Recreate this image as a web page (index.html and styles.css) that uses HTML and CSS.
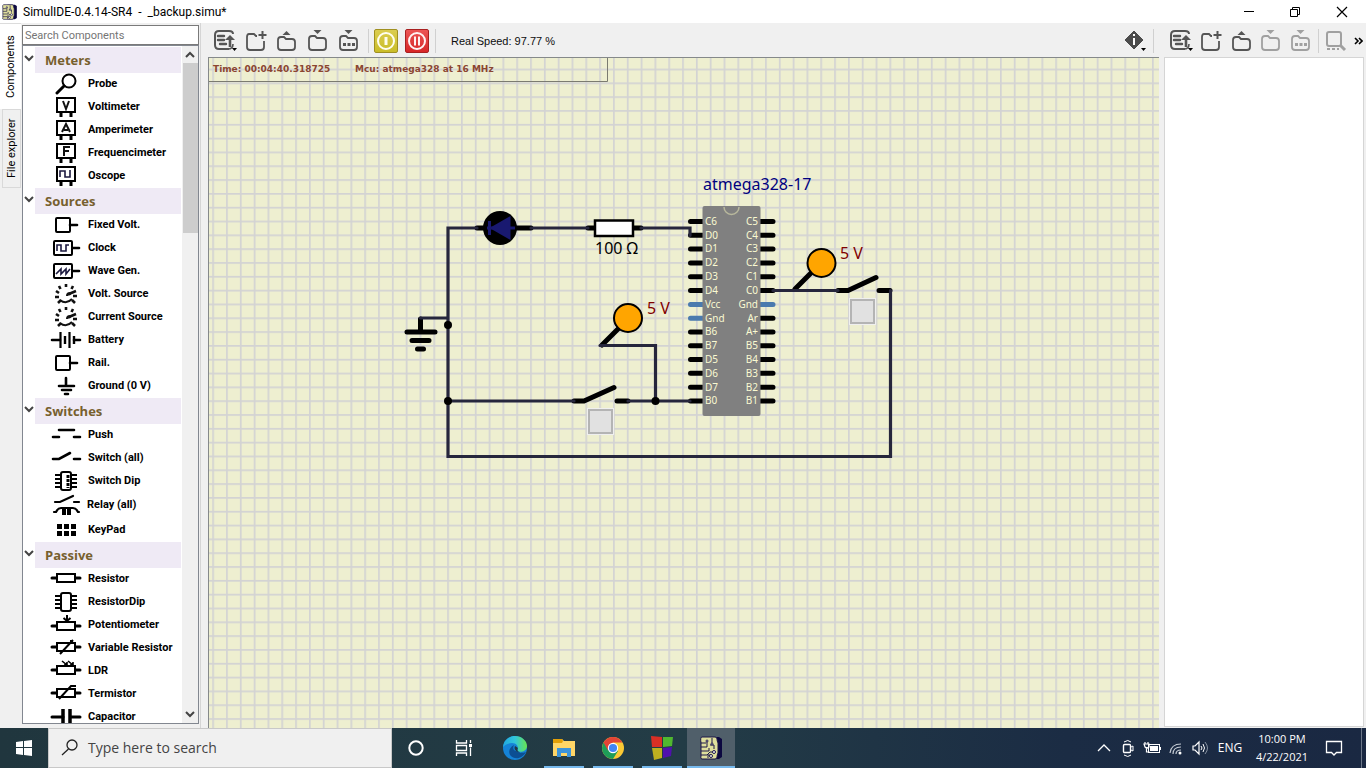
FILE: index.html
```html
<!DOCTYPE html>
<html lang="en">
<head>
<meta charset="utf-8">
<title>SimulIDE-0.4.14-SR4 - _backup.simu*</title>
<link rel="stylesheet" href="styles.css">
</head>
<body>
<svg class="defs" aria-hidden="true">
  <defs>
    <symbol id="chip-logo" viewBox="0 0 22 24">
      <path d="M8 1h11l3 2v18l-3 2H8z" fill="#0c0840"/>
      <path d="M2 1h13q2 0 2 2 0 2 1 4v10q-1 2-1 4 0 2-2 2H2q-2 0-1-3 0-2 0-4V7Q0 1 2 1z" fill="#dede9c" stroke="#1c1648"/>
      <path d="M1 7h5M1 11h6v-6M1 15h8v-3M1 19h6l3-3h3M12 2v5M8 22v-3h3M14 9v4M10 9h4" fill="none" stroke="#1c1648"/>
      <circle cx="7" cy="5" r="1" fill="#fff" stroke="#1c1648"/><circle cx="12" cy="8" r="1" fill="#fff" stroke="#1c1648"/><circle cx="14" cy="16" r="1.500" fill="#fff" stroke="#1c1648"/><circle cx="11" cy="20" r="1.500" fill="#fff" stroke="#1c1648"/>
    </symbol>
    <symbol id="list-up" viewBox="0 0 24 24">
      <path d="M20 5Q20 2 16 2H6Q2 2 2 6v10q0 4 4 4h10" fill="none" stroke="currentColor" stroke-width="2"/>
      <path d="M5 7h6M5 11h6M7 15h6" stroke="currentColor" stroke-width="2.4" stroke-linecap="round"/>
      <path d="M17 18V10" stroke="currentColor" stroke-width="2.6"/><path d="M12 11l5-5 5 5z" fill="currentColor"/><path d="M15 20q5 0 5-5" fill="none" stroke="currentColor" stroke-width="1.6"/>
      <path d="M19 19h5l-2.500 3z" fill="#000"/>
    </symbol>
    <symbol id="folder-new" viewBox="0 0 22 22">
      <path d="M12 6h-1L9 4H4Q2 4 2 7v10q0 3 3 3h11q3 0 3-3v-6" fill="none" stroke="currentColor" stroke-width="1.8"/><path d="M17.500 1v8M13.500 5h8" stroke="currentColor" stroke-width="2"/>
    </symbol>
    <symbol id="folder-up" viewBox="0 0 22 22">
      <path d="M2 10q0-3 3-3h3l2 2h6q3 0 3 3v5q0 3-3 3H5q-3 0-3-3z" fill="none" stroke="currentColor" stroke-width="1.800"/><path d="M6.500 5h8L10.500 1z" fill="currentColor"/>
    </symbol>
    <symbol id="folder-down" viewBox="0 0 22 22">
      <path d="M2 9q0-3 3-3h3l2 2h6q3 0 3 3v6q0 3-3 3H5q-3 0-3-3z" fill="none" stroke="currentColor" stroke-width="1.800"/><path d="M6.500 0h8L10.500 4z" fill="currentColor"/>
    </symbol>
    <symbol id="folder-dots" viewBox="0 0 22 22">
      <use href="#folder-down"/><path d="M5 13h3v3H5zM9.500 13h3v3h-3zM14 13h3v3h-3z" fill="currentColor"/>
    </symbol>
    <symbol id="meter" viewBox="0 0 32 22"><path d="M7 2h18v14H7z" fill="#fff" stroke="#000" stroke-width="2"/><path d="M11 17v4M21 17v4" stroke="#000" stroke-width="3"/></symbol>
    <symbol id="box-pin" viewBox="0 0 32 22"><rect x="6" y="4" width="14" height="14" rx="1" fill="#fff" stroke="#000" stroke-width="2"/><path d="M20 11h7" stroke="#000" stroke-width="2.600" stroke-linecap="round"/></symbol>
    <symbol id="gen" viewBox="0 0 32 22"><rect x="4" y="4" width="18" height="14" rx="1" fill="#fff" stroke="#000" stroke-width="2"/><path d="M23 11h6" stroke="#000" stroke-width="2.600" stroke-linecap="round"/></symbol>
    <symbol id="knob" viewBox="0 0 32 22"><path d="M16 1v3M9 3l1.500 3M23 3l-1.500 3M6 8l3 2M5 14h4M8 20l3-3M26 8l-6 2.500M27 13h-4M25 20l-3-3M18 11.500l3-1" stroke="#111" stroke-width="2.600"/><path d="M10 17q6 5 12-1M20 10q-3 0-3 3" fill="none" stroke="#111" stroke-width="2"/></symbol>
    <symbol id="res" viewBox="0 0 32 22"><path d="M2 11h28" stroke="#000" stroke-width="3" stroke-linecap="round"/><rect x="7" y="7" width="18" height="8" fill="#fff" stroke="#000" stroke-width="2"/></symbol>
    <symbol id="dip" viewBox="0 0 32 22"><path d="M5 5h22M5 9h22M5 13h22M5 17h22" stroke="#000" stroke-width="2"/><rect x="11" y="2" width="10" height="18" rx="2" fill="#fff" stroke="#000" stroke-width="2"/></symbol>
    <pattern id="grid" x="447.2" y="68.6" width="13.82" height="13.82" patternUnits="userSpaceOnUse"><path d="M0 0H13.820V1.700H1.700V13.820H0z" fill="#d3d3d3"/></pattern>
    <linearGradient id="edge-g" x1="0" y1="0" x2="1" y2="0"><stop offset="0" stop-color="#22a7df"/><stop offset=".5" stop-color="#31c6db"/><stop offset="1" stop-color="#68e34f"/></linearGradient>
  </defs>
</svg>
<div class="app">
  <header class="titlebar">
    <svg class="title-logo"><use href="#chip-logo"/></svg>
    <h1 class="title-text">SimulIDE-0.4.14-SR4 &nbsp;- &nbsp;_backup.simu*</h1>
    <div class="window-controls">
      <button aria-label="Minimize"><svg width="12" height="12"><path d="M1 5.500h10" stroke="#000"/></svg></button>
      <button aria-label="Restore"><svg width="12" height="12"><path d="M1.500 3.500h7v7h-7zM3.500 3.500v-2h7v7h-2" fill="none" stroke="#000"/></svg></button>
      <button aria-label="Close"><svg width="12" height="12"><path d="M1 1l10 10M11 1L1 11" stroke="#000" stroke-width="1.200"/></svg></button>
    </div>
  </header>
  <main class="workspace">
    <nav class="side-tabs" aria-label="Panels">
      <button class="side-tab side-tab-active">Components</button>
      <button class="side-tab">File explorer</button>
    </nav>
    <aside class="sidebar">
      <input class="search" type="text" aria-label="Search Components" placeholder="Search Components">
      <div class="tree-box">
        <div class="tree">
          <section><button class="group"><svg class="arrow"><path d="M1 2l4 4 4-4" /></svg><span>Meters</span></button>
            <ul>
              <li><svg class="ico"><circle cx="19" cy="8" r="6.500" fill="#fff" stroke="#000" stroke-width="2"/><path d="M14 13l-7 7" stroke="#000" stroke-width="3" stroke-linecap="round"/></svg>Probe</li>
              <li><svg class="ico"><use href="#meter"/><path d="M13 5l3 8 3-8" fill="none" stroke="#111" stroke-width="2"/></svg>Voltimeter</li>
              <li><svg class="ico"><use href="#meter"/><path d="M12 13l4-8 4 8M14 11h4" fill="none" stroke="#111" stroke-width="2"/></svg>Amperimeter</li>
              <li><svg class="ico"><use href="#meter"/><path d="M14 14V5h6M14 9h5" fill="none" stroke="#111" stroke-width="2"/></svg>Frequencimeter</li>
              <li><svg class="ico"><use href="#meter"/><path d="M10 12V6h5v6h5V5" fill="none" stroke="#1c1a40" stroke-width="1.600"/></svg>Oscope</li>
            </ul></section>
          <section><button class="group"><svg class="arrow"><path d="M1 2l4 4 4-4" /></svg><span>Sources</span></button>
            <ul>
              <li><svg class="ico"><use href="#box-pin"/></svg>Fixed Volt.</li>
              <li><svg class="ico"><use href="#gen"/><path d="M7 14V8h4v6h5V8h3" fill="none" stroke="#1c1a40" stroke-width="1.600"/></svg>Clock</li>
              <li><svg class="ico"><use href="#gen"/><path d="M6 14l5-5v5l5-5v5l4-5" fill="none" stroke="#1c1a40" stroke-width="1.600"/></svg>Wave Gen.</li>
              <li><svg class="ico"><use href="#knob"/></svg>Volt. Source</li>
              <li><svg class="ico"><use href="#knob"/></svg>Current Source</li>
              <li><svg class="ico"><path d="M2 11h8M24 11h6" stroke="#000" stroke-width="2.600" stroke-linecap="round"/><path d="M10.500 3v16M19.500 3v16" stroke="#000" stroke-width="2.200"/><path d="M15 7v8M24 7v8" stroke="#000" stroke-width="2.400"/></svg>Battery</li>
              <li><svg class="ico"><use href="#box-pin"/></svg>Rail.</li>
              <li><svg class="ico"><path d="M16 3v8M9 11h15M12 15h9M15 19h3" stroke="#000" stroke-width="2.600" stroke-linecap="round"/></svg>Ground (0 V)</li>
            </ul></section>
          <section><button class="group"><svg class="arrow"><path d="M1 2l4 4 4-4" /></svg><span>Switches</span></button>
            <ul>
              <li><svg class="ico"><path d="M3 13h6M24 13h6M9 6h15" stroke="#000" stroke-width="2.600" stroke-linecap="round"/></svg>Push</li>
              <li><svg class="ico"><path d="M3 12h6l11-6M24 12h6" fill="none" stroke="#000" stroke-width="2.600" stroke-linecap="round"/></svg>Switch (all)</li>
              <li><svg class="ico"><use href="#dip"/><path d="M18 5v13" stroke="#000" stroke-width="3" stroke-dasharray="3 1"/></svg>Switch Dip</li>
              <li class="tall"><svg class="ico"><path d="M5 8h5l13-6M24 8h5M4 18h2q2-4 5-4h12q3 0 5 4h1" fill="none" stroke="#000" stroke-width="2.200" stroke-linecap="round"/><path d="M13 14v6h2v-6M18 14v6h2v-6" fill="none" stroke="#000" stroke-width="2"/></svg>Relay (all)</li>
              <li><svg class="ico"><path d="M7 5h5v5H7zM14 5h5v5h-5zM21 5h5v5h-5zM7 12h5v5H7zM14 12h5v5h-5zM21 12h5v5h-5z"/></svg>KeyPad</li>
            </ul></section>
          <section><button class="group"><svg class="arrow"><path d="M1 2l4 4 4-4" /></svg><span>Passive</span></button>
            <ul>
              <li><svg class="ico"><use href="#res" y="-1"/></svg>Resistor</li>
              <li><svg class="ico"><use href="#dip"/></svg>ResistorDip</li>
              <li><svg class="ico"><use href="#res" y="1"/><path d="M17 1v6M13.500 4l3.500 3 3.500-3" fill="none" stroke="#000" stroke-width="2"/></svg>Potentiometer</li>
              <li><svg class="ico"><use href="#res" y="-1"/><path d="M10 17L23 3M20 4h3" fill="none" stroke="#000" stroke-width="2"/></svg>Variable Resistor</li>
              <li><svg class="ico"><use href="#res" y="-1"/><path d="M12 1l5 4M18 1l5 4M17 2v3h-3M23 2v3h-3" fill="none" stroke="#000" stroke-width="1.600"/></svg>LDR</li>
              <li><svg class="ico"><use href="#res" y="-1"/><path d="M9 16L21 3h5" fill="none" stroke="#000" stroke-width="2"/></svg>Termistor</li>
              <li><svg class="ico"><path d="M2 11h11M21 11h9" stroke="#000" stroke-width="3" stroke-linecap="round"/><path d="M13 3v16M20 3v16" stroke="#000" stroke-width="3.500"/></svg>Capacitor</li>
            </ul></section>
        </div>
        <div class="scrollbar">
          <svg class="arrow"><path d="M1 7l4-4 4 4"/></svg>
          <div class="thumb"></div>
          <svg class="arrow scroll-down"><path d="M1 2l4 4 4-4"/></svg>
        </div>
      </div>
    </aside>
    <section class="editor">
      <div class="toolbar">
        <button class="tool" aria-label="Recent circuits"><svg width="24" height="24"><use href="#list-up"/></svg></button>
        <button class="tool" aria-label="New circuit"><svg width="22" height="22"><use href="#folder-new"/></svg></button>
        <button class="tool" aria-label="Open circuit"><svg width="22" height="22"><use href="#folder-up"/></svg></button>
        <button class="tool" aria-label="Save circuit"><svg width="22" height="22"><use href="#folder-down"/></svg></button>
        <button class="tool" aria-label="Save circuit as"><svg width="22" height="22"><use href="#folder-dots"/></svg></button>
        <span class="divider divider-tight"></span>
        <button class="power power-on" aria-label="Power"><svg width="22" height="22"><circle cx="11" cy="11" r="8" fill="none" stroke="#fffef0" stroke-width="2"/><path d="M11 7v8" stroke="#fffef0" stroke-width="3"/></svg></button>
        <button class="power power-pause" aria-label="Pause"><svg width="22" height="22"><circle cx="11" cy="11" r="8" fill="none" stroke="#fff3f3" stroke-width="2"/><path d="M9 6.500v9M13 6.500v9" stroke="#fff3f3" stroke-width="2"/></svg></button>
        <span class="divider"></span>
        <span class="speed">Real Speed: 97.77 %</span>
        <button class="tool tool-info" aria-label="Info"><svg width="22" height="22"><path d="M10 1l9 9-9 9-9-9z" fill="#4c4c4c" stroke="#4c4c4c" stroke-linejoin="round"/><path d="M10 8v7M10 4v2" stroke="#fff" stroke-width="2"/><path d="M17 18h5l-2.500 3z"/></svg></button>
        <span class="divider"></span>
      </div>
      <div class="canvas">
        <svg class="circuit" role="img" aria-label="Circuit">
          <g transform="translate(-209 -58)">
            <rect x="200" y="50" width="110%" height="110%" fill="url(#grid)"/>
            <path d="M209 81.500h398.500V57" fill="none" stroke="#7b7b70"/>
            <g class="time"><text x="213" y="72">Time: 00:04:40.318725</text><text x="355" y="72">Mcu: atmega328 at 16 MHz</text></g>
            <path d="M477 228h54M588 228h53M420.500 319v12M407 332h28M412 340.500h17M417.500 349h6M602 345l17-17M795 289l17-17M574 401h10l30-13.500M617 401h11M838 290.500h10l28-13M879 290.500h11" fill="none" stroke="#000" stroke-width="5" stroke-linecap="round"/>
            <circle cx="500" cy="228" r="17"/><path d="M489.500 221v14M487 228h28" stroke="#191970" stroke-width="3"/><path d="M510.500 216v24l-21-12z" fill="#191970"/>
            <rect x="595" y="220.500" width="38" height="15.500" fill="#fff" stroke="#000" stroke-width="2.500"/>
            <g stroke="#000" stroke-width="2" fill="orange"><circle cx="628" cy="318" r="14"/><circle cx="821.500" cy="263" r="14"/></g>
            <g class="pins">
              <path d="M690.500 221.500h12M690.500 235.300h12M690.500 249.100h12M690.500 262.900h12M690.500 276.700h12M690.500 290.500h12M690.500 332h12M690.500 345.700h12M690.500 359.500h12M690.500 373.300h12M690.500 387.200h12M690.500 401h12M760 221.500h13M760 235.300h13M760 249.100h13M760 262.900h13M760 276.700h13M760 290.500h13M760 318.200h13M760 332h13M760 345.700h13M760 359.500h13M760 373.300h13M760 387.200h13M760 401h13"/>
              <path class="rail" d="M690.500 304.400h12M690.500 318.200h12M760 304.400h13"/>
            </g>
            <rect x="702.500" y="206" width="58" height="210" rx="2" fill="#808080"/>
            <path d="M724 207a7.500 7.500 0 0 0 15 0" fill="none" stroke="#b8b89c" stroke-width="1.500"/>
            <g class="pin-label">
              <text x="705" y="225">C6</text><text x="705" y="239">D0</text><text x="705" y="252">D1</text><text x="705" y="266">D2</text><text x="705" y="280">D3</text><text x="705" y="294">D4</text><text x="705" y="308">Vcc</text><text x="705" y="322">Gnd</text><text x="705" y="335">B6</text><text x="705" y="349">B7</text><text x="705" y="363">D5</text><text x="705" y="377">D6</text><text x="705" y="391">D7</text><text x="705" y="404">B0</text>
              <g text-anchor="end"><text x="758" y="225">C5</text><text x="758" y="239">C4</text><text x="758" y="252">C3</text><text x="758" y="266">C2</text><text x="758" y="280">C1</text><text x="758" y="294">C0</text><text x="758" y="308">Gnd</text><text x="758" y="322">Ar</text><text x="758" y="335">A+</text><text x="758" y="349">B5</text><text x="758" y="363">B4</text><text x="758" y="377">B3</text><text x="758" y="391">B2</text><text x="758" y="404">B1</text></g>
            </g>
            <path d="M477 228h-29v228.500h442.500v-166M531 228h57M641 228h49v7.500M420.500 318h27.500M448 401h126M600 345.500h55.500V401M628 401h62M773 290.500h65" fill="none" stroke="#26263c" stroke-width="3.200" stroke-linecap="round"/>
            <circle cx="448" cy="325" r="4"/><circle cx="448" cy="401" r="4"/><circle cx="655.500" cy="401" r="4"/>
            <g class="part-label"><text x="703" y="190" fill="#00007f">atmega328-17</text><text x="595" y="254">100 Ω</text><text x="647" y="314" fill="#7f0000">5 V</text><text x="840" y="259" fill="#7f0000">5 V</text></g>
          </g>
        </svg>
        <button class="key key-low" aria-label="Switch 1"></button>
        <button class="key key-high" aria-label="Switch 2"></button>
      </div>
    </section>
    <section class="code-panel">
      <div class="toolbar">
        <button class="tool" aria-label="Recent files"><svg width="24" height="24"><use href="#list-up"/></svg></button>
        <button class="tool" aria-label="New file"><svg width="22" height="22"><use href="#folder-new"/></svg></button>
        <button class="tool" aria-label="Open file"><svg width="22" height="22"><use href="#folder-up"/></svg></button>
        <button class="tool" aria-label="Save file" disabled><svg width="22" height="22"><use href="#folder-down"/></svg></button>
        <button class="tool" aria-label="Save file as" disabled><svg width="22" height="22"><use href="#folder-dots"/></svg></button>
        <span class="divider"></span>
        <button class="tool tool-find" aria-label="Find" disabled><svg width="22" height="22"><rect x="2" y="2" width="14" height="14" rx="2" fill="none" stroke="currentColor" stroke-width="2"/><path d="M15 15l5 5" stroke="currentColor" stroke-width="3"/><path d="M2 18h3v2H2zM7 18h3v2H7zM12 18h2v2h-2z" fill="currentColor"/></svg></button>
        <button class="more" aria-label="More"><svg width="9" height="8"><path d="M1 1l3 3-3 3M5 1l3 3-3 3" fill="none" stroke="#000" stroke-width="1.600"/></svg></button>
      </div>
      <div class="code-area"></div>
    </section>
  </main>
  <footer class="taskbar">
    <button class="start" aria-label="Start"><svg width="16" height="16"><path d="M0 2l7-1v6H0zM8 1l8-1v7H8zM0 8h7v7l-7-1zM8 8h8v8l-8-1z" fill="#fff"/></svg></button>
    <button class="task-search"><svg width="18" height="18"><circle cx="11" cy="6" r="5" fill="none" stroke="#222" stroke-width="1.300"/><path d="M7.500 10L1 16" stroke="#222" stroke-width="1.300"/></svg>Type here to search</button>
    <div class="task-buttons">
      <button aria-label="Cortana"><svg width="18" height="18"><circle cx="9" cy="9" r="6.700" fill="none" stroke="#fff" stroke-width="2"/></svg></button>
      <button aria-label="Task view"><svg width="18" height="18"><path d="M1.500 1v3h10V1M1.500 17v-3h10v3M1.500 6.500h10v5h-10zM15.500 1v3M15.500 8.500V17" fill="none" stroke="#fff" stroke-width="1.300"/><path d="M14 5h3v3h-3z" fill="#fff"/></svg></button>
    </div>
    <div class="task-apps">
      <button aria-label="Edge"><svg width="24" height="24"><circle cx="12" cy="12" r="12" fill="#1583d7"/><path d="M0 11C1 3 7 0 12 0c7 0 12 5 12 10 0 5-6 7-10 5 2-2 1-8-5-8-5 0-8 3-9 4z" fill="url(#edge-g)"/><path d="M14 15c3 3 6 2 9 1-3 6-11 9-16 3-2-4 0-8 4-10-2 4 0 6 3 6z" fill="#0c4f93"/><path d="M12 10c-2 4 3 8 10 6l2-2-2 2c-5 2-9-1-7-4-1-1-2-1-3-2z" fill="#213743"/></svg></button>
      <button class="open" aria-label="File Explorer"><svg width="22" height="20"><path d="M0 1h9l2 2h11v15H0z" fill="#ffd667"/><path d="M0 1h9l1 2-1 2H0z" fill="#e3a008"/><path d="M4 19v-9h14v9h-4v-4H8v4z" fill="#3d94d9"/></svg></button>
      <button class="open" aria-label="Chrome"><svg width="22" height="22"><circle cx="11" cy="11" r="11" fill="#fcc934"/><path d="M11 11L1.500 5.500A11 11 0 0 0 11 22l5-8z" fill="#1e9d58"/><path d="M1.500 5.500a11 11 0 0 1 19 0H11l-5 8z" fill="#e24436"/><circle cx="11" cy="11" r="5.200" fill="#fff"/><circle cx="11" cy="11" r="4.100" fill="#4285f4"/></svg></button>
      <button class="open" aria-label="Colour blocks"><svg width="22" height="24"><path d="M0 0l11 1v10H1z" fill="#d92f25"/><path d="M12 1h10l-1 9-9 1z" fill="#50b82f"/><path d="M1 12h10v10l-8 2z" fill="#bdb020"/><path d="M12 12l9-1-1 9-8 2z" fill="#5010ad"/></svg></button>
      <button class="open current" aria-label="SimulIDE"><svg width="22" height="24"><use href="#chip-logo"/></svg></button>
    </div>
    <div class="tray">
      <button aria-label="Hidden icons"><svg width="14" height="18"><path d="M1 12l6-6 6 6" fill="none" stroke="#fff" stroke-width="1.300"/></svg></button>
      <button aria-label="Meet now"><svg width="14" height="18"><rect x="2.500" y="5.500" width="7" height="8" rx="1" fill="none" stroke="#fff" stroke-width="1.400"/><path d="M10 8l2-1v5l-2-1M3 3q4-3 7 0M3 16q4 3 7 0" fill="none" stroke="#fff"/></svg></button>
      <button aria-label="Battery"><svg width="18" height="18"><rect x="5.500" y="5.500" width="11" height="8" fill="none" stroke="#fff"/><path d="M7 7h8v5H7zM16 8h2v3h-2z" fill="#fff"/><path d="M1 5h5v3q-2 2-4 0zM2 3v2M5 3v2M3.500 8v5h3" fill="none" stroke="#fff" stroke-width="1.200"/></svg></button>
      <button aria-label="Network"><svg width="16" height="18"><path d="M2 14Q3 5 13 5M5 15Q5 8 13 8M8 15q0-4 5-4" fill="none" stroke="#c5ccd5" stroke-width="1.200"/><circle cx="12" cy="14" r="1.500" fill="#fff"/></svg></button>
      <button aria-label="Volume"><svg width="18" height="18"><path d="M2 7h2l4-4v12l-4-4H2z" fill="none" stroke="#fff" stroke-width="1.200"/><path d="M10 7q2 2 0 4M12 5q3 4 0 8" fill="none" stroke="#fff"/><path d="M14 3q5 6 0 12" fill="none" stroke="#8792a2"/></svg></button>
      <button class="lang">ENG</button>
      <button class="clock"><span>10:00 PM</span><span>4/22/2021</span></button>
      <button class="notify" aria-label="Notifications"><svg width="18" height="18"><path d="M1.500 2.500h15v11h-5l-2.500 2.500-2.500-2.500h-5z" fill="none" stroke="#fff" stroke-width="1.300"/></svg></button>
      <button class="show-desktop" aria-label="Show desktop"></button>
    </div>
  </footer>
</div>
</body>
</html>
```
FILE: styles.css
```css
* { box-sizing: border-box; }
body { margin: 0; font: 12px/16px "Open Sans", "Noto Sans", sans-serif; color: #000; background: #f0f0f0; }
button { border: 0; padding: 0; background: none; font: inherit; color: inherit; display: flex; align-items: center; justify-content: center; }
svg { display: block; flex: none; }
ul { list-style: none; margin: 0; padding: 0; }
.defs { position: absolute; width: 0; height: 0; }
.app { height: 100vh; display: flex; flex-direction: column; }

.titlebar { height: 23px; flex: none; display: flex; align-items: center; background: #fff; padding-left: 2px; }
.title-logo { width: 15px; height: 16px; }
.title-text { font: 12px/16px Roboto, "Open Sans", sans-serif; margin: 0 0 0 6px; }
.window-controls { display: flex; margin-left: auto; }
.window-controls button { width: 46px; height: 20px; }
.window-controls button:last-child { width: 48px; }

.workspace { flex: 1; min-height: 0; display: flex; }
.side-tabs { width: 21px; flex: none; display: flex; flex-direction: column; align-items: flex-end; border-top: 1px solid #dcdcdc; }
.side-tab { writing-mode: vertical-rl; rotate: 180deg; width: 19px; height: 79px; border: 1px solid #d9d9d9; font: 11px/16px Roboto, "Open Sans", sans-serif; }
.side-tab-active { width: 21px; height: 85px; background: #fff; border-color: #fff; }
.sidebar { width: 180px; flex: none; padding: 2px 1px 4px; border-right: 1px solid #d5d5d5; display: flex; flex-direction: column; }
.search { height: 20px; flex: none; border: 1px solid #7a7a7a; background: #fff; padding: 0 2px; font: 11px/16px Roboto, "Open Sans", sans-serif; outline: 0; }
.search::placeholder { color: #757575; opacity: 1; }
.tree-box { flex: 1; min-height: 0; display: flex; border: 1px solid #828790; background: #fff; }
.tree { flex: 1; overflow: hidden; padding-top: 1px; }
.group { width: 100%; height: 26px; justify-content: flex-start; font-size: 13px; font-weight: 700; color: #77602e; }
.group span { flex: 1; height: 26px; line-height: 26px; text-align: left; padding-left: 10px; background: #efeaf5; }
.arrow { width: 10px; height: 10px; fill: none; stroke: #444; stroke-width: 2; }
.group .arrow { margin: 0 1px 2px; }
.tree ul { margin: -1px 0 1px; }
.tree li { height: 23px; display: flex; align-items: center; gap: 6px; padding-left: 27px; font: 700 11px/16px Roboto, "Open Sans", sans-serif; white-space: nowrap; }
.tree li.tall { height: 26px; gap: 5px; }
.ico { width: 32px; height: 22px; }
.ico use { width: 32px; height: 22px; }
.scrollbar { width: 16px; flex: none; margin-left: 1px; background: #f0f0f0; display: flex; flex-direction: column; align-items: center; padding: 4px 0 3px; }
.thumb { width: 15px; height: 170px; margin-top: 3px; background: #cdcdcd; }
.scroll-down { margin-top: auto; }

.editor { flex: 1; min-width: 0; display: flex; flex-direction: column; padding-left: 7px; }
.toolbar { height: 34px; flex: none; display: flex; align-items: center; color: #555; padding-top: 1px; }
.tool { width: 31px; height: 30px; }
.tool:disabled { color: #a0a0a0; }
.divider { width: 1px; height: 24px; background: #d0d0d0; margin: 0 5px; }
.editor .toolbar { padding-left: 1px; padding-right: 1px; }
.divider-tight { margin-left: 4px; }
.power { width: 24px; height: 24px; border: 1px solid #a09021; border-radius: 2px; background: linear-gradient(#dbcd50, #cabd28); margin-right: 7px; }
.power-pause { border-color: #a82020; background: linear-gradient(#ec5555, #d72626); margin-right: 0; }
.power + .divider { margin-left: 6px; }
.speed { color: #0d0d0d; font: 11px/16px "Liberation Sans", Arial, sans-serif; margin-left: 10px; }
.tool-info { margin-left: auto; width: 26px; }
.canvas { position: relative; flex: 1; min-height: 0; background: #eeefd0; border: 1px solid #85898a; border-width: 1px 0 0 1px; overflow: hidden; margin-right: 1px; }
.circuit { width: 100%; height: 100%; }
.time { font: bold 9px "DejaVu Sans", sans-serif; fill: #8b4531; }
.pins { stroke: #000; stroke-width: 5; stroke-linecap: round; }
.rail { stroke: #4a7aae; }
.pin-label { font: 10px "Noto Sans", sans-serif; fill: #fafad2; }
.part-label { font: 16px "Noto Sans", sans-serif; }
.key { position: absolute; width: 25px; height: 25px; background: #e1e1e1; border: 2px solid #b4b4b4; outline: 1px solid #efefef; }
.key-low { left: 379px; top: 351px; }
.key-high { left: 641px; top: 241px; }

.code-panel { width: 206px; flex: none; display: flex; flex-direction: column; padding: 0 2px 1px 4px; }
.code-panel .toolbar { padding-left: 2px; }
.code-panel .tool { width: 30px; }
.code-panel .tool:nth-child(2) { width: 32px; }
.code-panel .divider { margin: 0 2px; }
.code-panel .tool-find { width: 32px; }
.more { width: 12px; height: 20px; }
.code-area { flex: 1; background: #fff; border: 1px solid #d5d5d5; }

.taskbar { height: 40px; flex: none; display: flex; color: #fff; background: linear-gradient(90deg, #20363e 0%, #233c46 50%, #1b2c44 78%, #1a2842 100%); }
.start { width: 48px; }
.task-search { width: 344px; height: 40px; justify-content: flex-start; gap: 9px; padding-left: 12px; background: #f0f0f0; border: 1px solid #c8c8c8; color: #444; font-size: 14px; line-height: 20px; }
.task-buttons, .task-apps { display: flex; }
.task-buttons button, .task-apps button { width: 48px; height: 40px; }
.task-apps { gap: 1px; margin-left: 3px; }
.task-apps .open { background: linear-gradient(#76b9ed, #76b9ed) center bottom / 40px 2px no-repeat; }
.task-apps .current { background: linear-gradient(#76b9ed, #76b9ed) center bottom / 48px 2px no-repeat, #505f6a; }
.tray { margin-left: auto; display: flex; align-items: center; }
.tray button { width: 24px; height: 40px; }
.tray .lang { width: 36px; }
.tray .clock { width: 68px; flex-direction: column; font-size: 11px; line-height: 18px; }
.tray .notify { width: 36px; margin-right: 9px; }
.tray .show-desktop { width: 5px; border-left: 1px solid #6d7889; }
```
